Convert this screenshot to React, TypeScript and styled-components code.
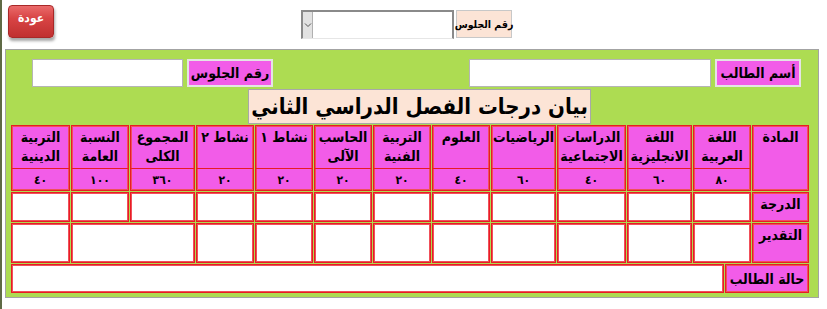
import styled, { createGlobalStyle } from "styled-components";

const GlobalStyle = createGlobalStyle`
  html, body {
    margin: 0;
    padding: 0;
    background: #ffffff;
  }
  body {
    font-family: "DejaVu Sans Condensed", "DejaVu Sans", "Liberation Sans", sans-serif;
    overflow: hidden;
  }
`;

const Page = styled.div`
  width: 827px;
  height: 309px;
  box-sizing: border-box;
  border-left: 2px solid #5f6a45;
  background: #ffffff;
`;

const TopBar = styled.div`
  height: 49px;
  box-sizing: border-box;
  padding: 5px 315px 0 6px;
  display: flex;
  justify-content: space-between;
  align-items: flex-start;
`;

const BackButton = styled.button`
  width: 46px;
  height: 33px;
  border: 1px solid #a82828;
  border-radius: 4px;
  background: linear-gradient(#ea6a6a 0%, #d84444 40%, #c03030 100%);
  box-shadow: 1px 3px 3px rgba(0, 0, 0, 0.35);
  color: #ffffff;
  font-family: "DejaVu Sans Condensed", "DejaVu Sans", sans-serif;
  font-weight: bold;
  font-size: 12px;
  padding: 0 0 8px;
  cursor: pointer;
`;

const SeatGroup = styled.div`
  margin-top: 5px;
  display: flex;
  direction: rtl;
  gap: 2px;
`;

const PeachLabel = styled.div`
  width: 56px;
  height: 28px;
  box-sizing: border-box;
  background: #fce4d6;
  border: 1px solid #c8c8c8;
  font-weight: bold;
  font-size: 10.5px;
  display: flex;
  align-items: center;
  justify-content: center;
  white-space: nowrap;
`;

const Combo = styled.div`
  width: 153px;
  height: 29px;
  box-sizing: border-box;
  border-top: 2px solid #8a8a8a;
  border-right: 2px solid #8a8a8a;
  border-left: 2px solid #8a8a8a;
  border-bottom: 1px solid #e6e6e6;
  background: #ffffff;
  display: flex;
  direction: ltr;
`;

const ComboArrow = styled.div`
  width: 10px;
  height: 100%;
  box-sizing: border-box;
  background: #e2e2e2;
  border-right: 1px solid #b0b0b0;
  display: flex;
  align-items: center;
  justify-content: center;
`;

const Panel = styled.div`
  margin-left: 3px;
  width: 814px;
  height: 249px;
  box-sizing: border-box;
  border: 1px solid #a3a3a3;
  background: #addc52;
  direction: rtl;
  padding-top: 9px;
  display: flex;
  flex-direction: column;
`;

const FieldRow = styled.div`
  height: 28px;
  display: flex;
  justify-content: space-between;
  padding: 0 17px 0 26px;
`;

const FieldGroup = styled.div`
  display: flex;
  gap: 4px;
`;

const PinkLabel = styled.div`
  width: 86px;
  height: 28px;
  box-sizing: border-box;
  background: #f25ce8;
  border: 2px solid #e4e4e4;
  font-weight: bold;
  font-size: 14px;
  display: flex;
  align-items: center;
  justify-content: center;
  white-space: nowrap;
`;

const TextBox = styled.div<{ $w: number }>`
  width: ${(p) => p.$w}px;
  height: 28px;
  box-sizing: border-box;
  background: #ffffff;
  border: 1px solid #b5b5b5;
`;

const TitleBox = styled.div`
  margin: 2px 227px 0 0;
  width: 343px;
  height: 35px;
  box-sizing: border-box;
  background: #fce4d6;
  border: 1px solid #a8a8a8;
  font-weight: bold;
  font-size: 22px;
  white-space: nowrap;
  display: flex;
  align-items: center;
  justify-content: center;
`;

const Grid = styled.div`
  margin: 1px 9px 0 4px;
  display: grid;
  grid-template-columns: 57px 58px 65px 69px 65px 58px 58px 58px 58px 58px 65px 58px 59px;
  grid-template-rows: 66px 30px 40px;
  gap: 1px;
`;

const redEdge = `
  border: 1px solid #e81c24;
  box-shadow: inset 0 0 0 1px #f0505a;
`;

const Cell = styled.div<{ $pink?: boolean; $span?: number }>`
  box-sizing: border-box;
  ${redEdge}
  background: ${(p) => (p.$pink ? "#f25ce8" : "#ffffff")};
  grid-column: ${(p) => (p.$span ? `span ${p.$span}` : "auto")};
  font-weight: bold;
  font-size: 14px;
  text-align: center;
  padding-top: 3px;
`;

const HeadCell = styled.div`
  box-sizing: border-box;
  ${redEdge}
  background: #f25ce8;
  display: flex;
  flex-direction: column;
`;

const HeadText = styled.div`
  flex: 1;
  font-weight: bold;
  font-size: 14px;
  line-height: 19px;
  text-align: center;
  padding-top: 2px;
`;

const HeadNum = styled.div`
  height: 22px;
  box-sizing: border-box;
  border-top: 1px solid #e81c24;
  font-weight: bold;
  font-size: 12px;
  letter-spacing: 4px;
  display: flex;
  align-items: center;
  justify-content: center;
`;

const StatusRow = styled.div`
  margin: 1px 9px 0 5px;
  height: 29px;
  display: flex;
  gap: 1px;
`;

const StatusLabel = styled.div`
  width: 84px;
  box-sizing: border-box;
  ${redEdge}
  background: #f25ce8;
  font-weight: bold;
  font-size: 14px;
  display: flex;
  align-items: center;
  justify-content: center;
  white-space: nowrap;
`;

const StatusBox = styled.div`
  flex: 1;
  box-sizing: border-box;
  ${redEdge}
  background: #ffffff;
`;

const subjects = [
  { name: "اللغة العربية", max: "٨٠" },
  { name: "اللغة الانجليزية", max: "٦٠" },
  { name: "الدراسات الاجتماعية", max: "٤٠" },
  { name: "الرياضيات", max: "٦٠" },
  { name: "العلوم", max: "٤٠" },
  { name: "التربية الفنية", max: "٢٠" },
  { name: "الحاسب الآلى", max: "٢٠" },
  { name: "نشاط ١", max: "٢٠" },
  { name: "نشاط ٢", max: "٢٠" },
  { name: "المجموع الكلى", max: "٣٦٠" },
  { name: "النسبة العامة", max: "١٠٠" },
  { name: "التربية الدينية", max: "٤٠" },
];

const App = () => {
  return (
    <>
      <GlobalStyle />
      <Page>
        <TopBar>
          <BackButton>عودة</BackButton>
          <SeatGroup>
            <PeachLabel>رقم الجلوس</PeachLabel>
            <Combo>
              <ComboArrow>
                <svg width="8" height="6" viewBox="0 0 8 6">
                  <polyline points="1,1.5 4,4.5 7,1.5" fill="none" stroke="#555" strokeWidth="1" />
                </svg>
              </ComboArrow>
            </Combo>
          </SeatGroup>
        </TopBar>

        <Panel>
          <FieldRow>
            <FieldGroup>
              <PinkLabel>أسم الطالب</PinkLabel>
              <TextBox $w={242} />
            </FieldGroup>
            <FieldGroup>
              <PinkLabel>رقم الجلوس</PinkLabel>
              <TextBox $w={151} />
            </FieldGroup>
          </FieldRow>

          <TitleBox>بيان درجات الفصل الدراسي الثاني</TitleBox>

          <Grid>
            <HeadCell>
              <HeadText>المادة</HeadText>
            </HeadCell>
            {subjects.map((s) => (
              <HeadCell key={s.name}>
                <HeadText>{s.name}</HeadText>
                <HeadNum>{s.max}</HeadNum>
              </HeadCell>
            ))}

            <Cell $pink>الدرجة</Cell>
            {subjects.map((s) => (
              <Cell key={"d" + s.name} />
            ))}

            <Cell $pink>التقدير</Cell>
            {subjects.slice(0, 9).map((s) => (
              <Cell key={"t" + s.name} />
            ))}
            <Cell $span={2} />
            <Cell />
          </Grid>

          <StatusRow>
            <StatusLabel>حالة الطالب</StatusLabel>
            <StatusBox />
          </StatusRow>
        </Panel>
      </Page>
    </>
  );
};

export default App;
